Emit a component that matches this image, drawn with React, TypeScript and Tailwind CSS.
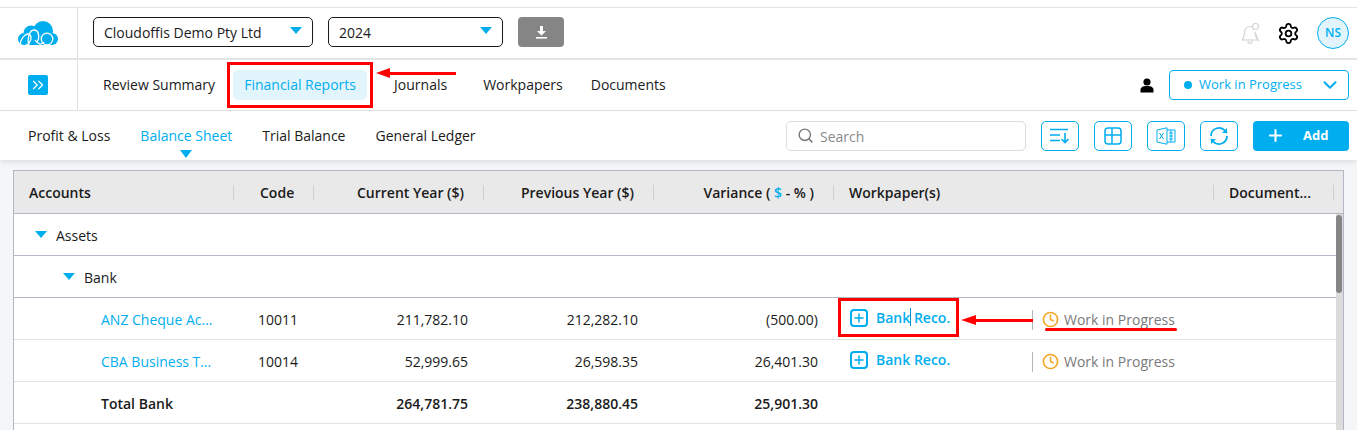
import React from "react";
import { Settings, Search, ChevronDown, ChevronsRight, Plus, Clock } from "lucide-react";

const Tri = ({ cls }: { cls: string }) => (
  <span className={`inline-block w-0 h-0 border-l-[6px] border-r-[6px] border-t-[7px] border-l-transparent border-r-transparent border-t-[#00aeef] ${cls}`} />
);

const Logo = () => (
  <svg width="40" height="25" viewBox="0 0 40 25">
    <g fill="#00aeef">
      <circle cx="6" cy="18" r="6" />
      <circle cx="13" cy="12" r="7.500" />
      <circle cx="25" cy="10" r="10" />
      <circle cx="34" cy="18" r="6" />
      <rect x="5" y="16" width="29" height="8" />
    </g>
    <g fill="none" stroke="#fff" strokeWidth="1.300">
      <path d="M2 24C3 16 9 11 12 14c3 4-2 11-5 10" />
      <path d="M11 24c-2-5 0-15 5-15s6 8 3 12" />
      <path d="M17 19c3 5 7 5 9 2" />
      <circle cx="29" cy="18" r="5.800" />
    </g>
  </svg>
);

const IconBtn = ({ children }: { children: React.ReactNode }) => (
  <button className="w-[38px] h-[30px] border border-[#00aeef] rounded-[5px] flex items-center justify-center text-[#00aeef]">{children}</button>
);

const Divider = () => <span className="w-px h-[15px] bg-[#cfcfcf]" />;

const HCell = ({ children, cls = "" }: { children?: React.ReactNode; cls?: string }) => (
  <div className={`h-[42px] flex items-center ${cls}`}>{children}</div>
);

const BankReco = () => (
  <div className="flex items-center h-full pl-[16px] pb-[1px] -mt-[3px] text-[#00aeef] font-semibold">
    <span className="w-[18px] h-[18px] border-2 border-[#00aeef] rounded-[4px] flex items-center justify-center">
      <Plus size={14} strokeWidth={2.600} />
    </span>
    <span className="ml-[8px]">Bank Reco.</span>
  </div>
);

const Wip = () => (
  <div className="flex items-center gap-[5px] text-[#7a7a7a]">
    <Clock size={17} className="text-[#f5a623]" strokeWidth={2.200} />
    <span>Work in Progress</span>
  </div>
);

const grid = "grid grid-cols-[220px_80px_170px_170px_180px_198px_182px_1fr]";

const DataRow = ({ name, code, a, b, c }: { name: string; code: string; a: string; b: string; c: string }) => (
  <div className={`${grid} h-[42px] items-center border-b border-[#e2e2e2] mr-[7px] pt-[2px]`}>
    <div className="pl-[87px] pr-[20px] text-[#00aeef] truncate">{name}</div>
    <div className="pl-[24px]">{code}</div>
    <div className="text-right pr-[16px]">{a}</div>
    <div className="text-right pr-[16px]">{b}</div>
    <div className="text-right pr-[16px]">{c}</div>
    <BankReco />
    <div className="h-[20px] flex items-center border-l border-[#b5b5b5] pl-[9px]"><Wip /></div>
    <div />
  </div>
);

export default function App() {
  return (
    <div className="relative w-[1357px] h-[430px] overflow-hidden bg-[#f5f6f8] text-[14px] text-[#1a1a1a] font-['Open_Sans',sans-serif]">
      <div className="bg-white shadow-[0_2px_5px_rgba(0,0,0,0.1)]">
        {/* top bar */}
        <div className="pt-[7px]">
          <div className="h-[53px] border-t border-b-2 border-[#e4e4e4] flex items-center">
            <div className="w-[78px] h-full border-r border-[#e0e0e0] flex items-center justify-center pr-px"><Logo /></div>
            <div className="ml-[15px] -mt-[2px] w-[220px] h-[30px] border border-[#1a1a1a] rounded-[5px] flex items-center justify-between pl-[10px] pr-[10px]">
              <span>Cloudoffis Demo Pty Ltd</span>
              <Tri cls="-mt-[3px]" />
            </div>
            <div className="ml-[15px] -mt-[2px] w-[175px] h-[30px] border border-[#1a1a1a] rounded-[5px] flex items-center justify-between pl-[10px] pr-[10px]">
              <span>2024</span>
              <Tri cls="-mt-[3px]" />
            </div>
            <button className="ml-[15px] -mt-[2px] w-[46px] h-[30px] bg-[#858585] rounded-[4px] flex items-center justify-center text-white">
              <svg width="13" height="13" viewBox="0 0 13 13" fill="#fff">
                <path d="M5 0h3v5h3L6.500 9.500 2 5h3z" />
                <rect x="1" y="11" width="11" height="1.600" />
              </svg>
            </button>
            <div className="ml-auto flex items-center">
              <svg width="20" height="22" viewBox="0 0 20 22" fill="none" stroke="#d4d4d4" strokeWidth="1.200" className="mr-[17px] mt-[2px]">
                <path d="M2 17c2-2 2-4 2.500-7.500C5 6 7 3.500 10 3.500c1 0 2 .3 3 1M15 9c.5 3 .5 6 3 8z" />
                <path d="M2 17h16M8 18c0 3 4 3 4 0" />
                <circle cx="15.500" cy="3.500" r="3" />
              </svg>
              <Settings size={23} className="text-black mr-[17px]" strokeWidth={1.900} />
              <span className="w-[32px] h-[32px] rounded-full border border-[#00aeef] bg-[#e3f5fc] text-[#00aeef] text-[12px] font-semibold flex items-center justify-center mr-[8px]">NS</span>
            </div>
          </div>
        </div>
        {/* tabs */}
        <div className="h-[51px] border-b border-[#e0e0e0] flex items-center">
          <div className="w-[78px] h-full border-r border-[#e0e0e0] flex items-center justify-center pr-px">
            <span className="w-[20px] h-[20px] bg-[#00aeef] rounded-[2px] flex items-center justify-center text-white"><ChevronsRight size={18} strokeWidth={1.600} /></span>
          </div>
          <span className="ml-[25px] -mt-[2px]">Review Summary</span>
          <span className="ml-[18px] w-[134px] h-[30px] bg-[#e3f5fc] rounded-[5px] text-[#00aeef] flex items-center justify-center pb-[2px]">Financial Reports</span>
          <span className="ml-[27px] -mt-[2px]">Journals</span>
          <span className="ml-[36px] -mt-[2px]">Workpapers</span>
          <span className="ml-[28px] -mt-[2px]">Documents</span>
          <div className="ml-auto flex items-center">
            <svg width="14" height="15" viewBox="0 0 14 15" className="mr-[15px]">
              <circle cx="7" cy="4" r="3.600" fill="#000" />
              <path d="M0.500 14.500v-2.500c0-2.500 2-4 6.500-4s6.500 1.500 6.500 4v2.500z" fill="#000" />
            </svg>
            <div className="w-[180px] h-[30px] border border-[#00aeef] rounded-[4px] flex items-center pl-[14px] pr-[7px] text-[#00aeef] text-[13px] mr-[8px]">
              <span className="w-[8px] h-[8px] rounded-full bg-[#00aeef] mr-[7px]" />
              <span>Work in Progress</span>
              <ChevronDown size={22} className="ml-auto" strokeWidth={2.200} />
            </div>
          </div>
        </div>
        {/* sub tabs */}
        <div className="h-[49px] flex items-center">
          <span className="ml-[28px]">Profit &amp; Loss</span>
          <span className="relative ml-[30px] text-[#00aeef]">
            Balance Sheet
            <span className="absolute left-1/2 -translate-x-1/2 top-[25px] w-0 h-0 border-l-[6.500px] border-r-[6.500px] border-t-[8px] border-l-transparent border-r-transparent border-t-[#00aeef]" />
          </span>
          <span className="ml-[30px]">Trial Balance</span>
          <span className="ml-[30px]">General Ledger</span>
          <div className="ml-auto flex items-center gap-[15px] mr-[8px]">
            <div className="w-[240px] h-[30px] border border-[#dcdcdc] rounded-[5px] flex items-center pl-[10px] text-[#8a8a8a]">
              <Search size={17} className="text-[#777]" />
              <span className="ml-[6px] mt-[2px]">Search</span>
            </div>
            <IconBtn>
              <svg width="22" height="16" viewBox="0 0 22 16" fill="none" stroke="#00aeef" strokeWidth="1.600">
                <path d="M1 1.500h18M1 7h10M1 12.500h10M16 5v9.500M12.500 11l3.500 3.500 3.500-3.500" />
              </svg>
            </IconBtn>
            <IconBtn>
              <svg width="18" height="18" viewBox="0 0 18 18" fill="none" stroke="#00aeef" strokeWidth="1.500">
                <rect x="1" y="1" width="16" height="16" rx="3" />
                <path d="M1 8h16M8 1v16" />
              </svg>
            </IconBtn>
            <IconBtn>
              <svg width="20" height="18" viewBox="0 0 20 18" fill="none" stroke="#00aeef" strokeWidth="1">
                <path d="M1 3l10-2.200v16.400L1 15z" fill="#fff" />
                <path d="M11 3h8v12h-8M13 6h4M13 9h4M13 12h4M15 3v12" />
                <path d="M3.500 6l4 6M7.500 6l-4 6" />
              </svg>
            </IconBtn>
            <IconBtn>
              <svg width="20" height="20" viewBox="0 0 20 20" fill="none" stroke="#00aeef" strokeWidth="1.800">
                <path d="M2 10a8 8 0 0 1 14-5.300L18 7" />
                <path d="M18 2v5h-5" fill="#00aeef" strokeWidth="0" />
                <path d="M18 10a8 8 0 0 1-14 5.300L2 13" />
                <path d="M2 18v-5h5" fill="#00aeef" strokeWidth="0" />
              </svg>
            </IconBtn>
            <button className="w-[96px] h-[30px] bg-[#00aeef] rounded-[4px] flex items-center text-white font-bold text-[13px] pl-[13px]">
              <Plus size={19} strokeWidth={2.600} />
              <span className="ml-[18px]">Add</span>
            </button>
          </div>
        </div>
      </div>

      {/* table */}
      <div className="relative mx-[13px] mt-[10px] border-l border-r border-t border-[#b3b7c4] bg-white h-[300px]">
        <div className={`${grid} h-[43px] bg-[#e9e9e9] border-b border-[#b3b7c4] font-semibold items-center`}>
          <HCell cls="justify-between pl-[15px]">Accounts<Divider /></HCell>
          <HCell cls="justify-between pl-[26px]">Code<Divider /></HCell>
          <HCell cls="justify-end gap-[19px]">Current Year ($)<Divider /></HCell>
          <HCell cls="justify-end gap-[19px]">Previous Year ($)<Divider /></HCell>
          <HCell cls="justify-end gap-[19px]"><span>Variance ( <span className="text-[#00aeef]">$</span> - % )</span><Divider /></HCell>
          <HCell cls="pl-[15px] col-span-2 justify-between">Workpaper(s)<Divider /></HCell>
          <div className="flex items-center justify-between pl-[15px] w-[120px] whitespace-nowrap">Document...<Divider /></div>
        </div>
        <div className="h-[42px] border-b border-[#b3b7c4] flex items-center pl-[21px] pt-[2px] font-semibold mr-[7px]">
          <Tri cls="mr-[9px] -mt-[3px]" /><span className="font-medium">Assets</span>
        </div>
        <div className="h-[42px] border-b border-[#b3b7c4] flex items-center pl-[49px] pt-[2px] mr-[7px]">
          <Tri cls="mr-[9px] -mt-[3px]" /><span className="font-medium">Bank</span>
        </div>
        <DataRow name="ANZ Cheque Account" code="10011" a="211,782.10" b="212,282.10" c="(500.00)" />
        <DataRow name="CBA Business Transaction" code="10014" a="52,999.65" b="26,598.35" c="26,401.30" />
        <div className={`${grid} h-[42px] items-center border-b border-[#e2e2e2] mr-[7px] pt-[2px] font-semibold`}>
          <div className="pl-[87px]">Total Bank</div>
          <div />
          <div className="text-right pr-[16px]">264,781.75</div>
          <div className="text-right pr-[16px]">238,880.45</div>
          <div className="text-right pr-[16px]">25,901.30</div>
          <div />
        </div>
        {/* scrollbar */}
        <div className="absolute right-0 top-[43px] bottom-0 w-[7px] bg-[#dcdcdc]">
          <div className="w-[6px] h-[78px] mt-[1px] bg-[#858585] rounded-[3px]" />
        </div>
      </div>

      {/* red annotations */}
      <div className="absolute left-[227px] top-[62px] w-[146px] h-[46px] border-[3px] border-[#f00]" />
      <div className="absolute left-[389px] top-[72px] w-[67px] h-[3px] bg-[#f00]" />
      <div className="absolute left-[376px] top-[68px] w-0 h-0 border-t-[5px] border-b-[5px] border-r-[14px] border-t-transparent border-b-transparent border-r-[#f00]" />
      <div className="absolute left-[838px] top-[298px] w-[121px] h-[39px] border-[3px] border-[#f00]" />
      <div className="absolute left-[910px] top-[308px] w-px h-[18px] bg-[#0090d0]" />
      <div className="absolute left-[975px] top-[319px] w-[58px] h-[3px] bg-[#f00]" />
      <div className="absolute left-[961px] top-[315px] w-0 h-0 border-t-[5px] border-b-[5px] border-r-[15px] border-t-transparent border-b-transparent border-r-[#f00]" />
      <div className="absolute left-[1045px] top-[328px] w-[132px] h-[3px] bg-[#f00] rounded-full" />
    </div>
  );
}
